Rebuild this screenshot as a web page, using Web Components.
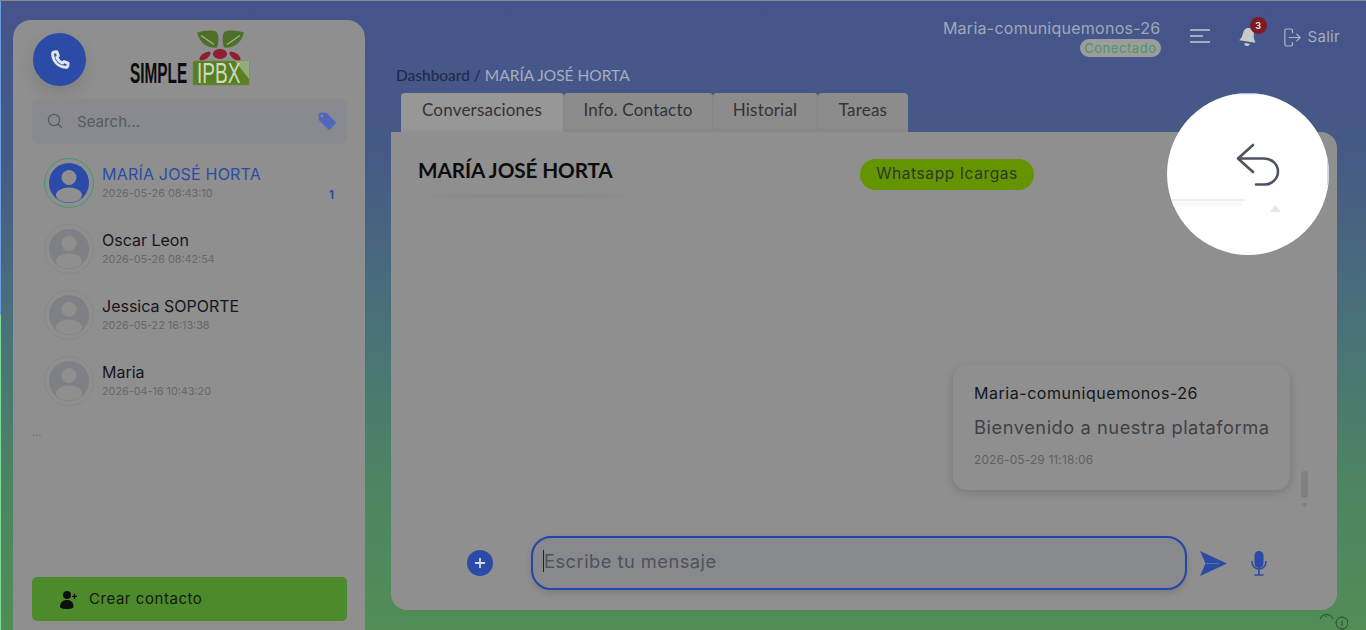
<!DOCTYPE html>
<html lang="es"><head><meta charset="utf-8"><title>Simple IPBX</title>
<style>
html,body{margin:0;height:630px;overflow:hidden}
body{font-family:Inter,"Liberation Sans",sans-serif}
</style></head><body>
<app-shell>
  <side-panel slot="side">
    <contact-row name="MARÍA JOSÉ HORTA" date="2026-05-26 08:43:10" active badge="1"></contact-row>
    <contact-row name="Oscar Leon" date="2026-05-26 08:42:54"></contact-row>
    <contact-row name="Jessica SOPORTE" date="2026-05-22 16:13:38"></contact-row>
    <contact-row name="Maria" date="2026-04-16 10:43:20"></contact-row>
  </side-panel>
  <top-bar slot="top"></top-bar>
  <tab-bar slot="tabs"></tab-bar>
  <chat-panel slot="chat"></chat-panel>
</app-shell>
<tour-spot></tour-spot>
<script>
function def(name, html){
  customElements.define(name, class extends HTMLElement{
    constructor(){super();const r=this.attachShadow({mode:'open'});this._h=html;r.innerHTML=typeof html==='function'?'':html;}
    connectedCallback(){ if(typeof this._h==='function') this.shadowRoot.innerHTML=this._h(this); }
  });
}
const SANS='Inter,"Liberation Sans",sans-serif';
def('app-shell',`<style>
:host{display:grid;grid-template-columns:352px 946px;grid-template-rows:131px 478px 20px;column-gap:26px;width:1366px;height:630px;box-sizing:border-box;padding:0 0 0 13px;overflow:hidden;position:relative;
background:linear-gradient(180deg,#45548c 0%,#465a85 25%,#49707a 50%,#4d8364 75%,#518d55 100%);border-top:1px solid #888}
.side{grid-row:1/4;padding-top:19px;min-height:0}
.right{grid-row:1;display:flex;flex-direction:column;min-width:0}
.chat{grid-row:2}
.strip{position:absolute;left:0;top:0;bottom:0;width:1px;background:linear-gradient(180deg,#6f9ae0 0 50%,#7fdca0 50% 100%)}
.mark{position:absolute;right:18px;bottom:0}
</style><span class="strip"></span>
<div class="side"><slot name="side"></slot></div>
<div class="right"><slot name="top"></slot><slot name="tabs"></slot></div>
<div class="chat"><slot name="chat"></slot></div>
<svg class="mark" width="30" height="20" viewBox="0 0 30 20" fill="none" stroke="#20352a" stroke-width=".8"><path d="M2 9a7 7 0 0 1 13 0"/><path d="M8 6v1"/><circle cx="24" cy="13" r="6"/><path d="M24 11v5"/></svg>`);

def('side-panel',`<style>
:host{display:flex;flex-direction:column;box-sizing:border-box;width:352px;height:640px;background:#8f8f8f;border-radius:18px 18px 0 0;padding:13px 18px 0 19px;font-family:${SANS}}
.head{display:flex;align-items:flex-start;height:66px}
.call{width:53px;height:53px;border-radius:50%;background:#2b4ba6;box-shadow:0 8px 16px rgba(0,0,0,.1);display:flex;align-items:center;justify-content:center;flex:none;margin-left:1px}
.logo{margin:-3px 0 0 42px;display:block;overflow:visible}
.search{display:flex;align-items:center;height:45px;box-sizing:border-box;background:#888a90;border-radius:7px;padding:0 10px 1px 15px;color:#565a60;font-size:15px;letter-spacing:.05px}
.search span{margin-left:14px;flex:1}
.list{display:flex;flex-direction:column;margin-top:6px}
.more{color:#5f7a60;font-size:11px;line-height:12px;margin-top:12px}
.spacer{flex:1}
.btn{display:flex;align-items:center;height:44px;flex:none;background:#4c8a2b;border-radius:5px;margin-bottom:39px;padding-left:28px;color:#141a12;font-size:15px;letter-spacing:.55px}
.btn span{margin:0 0 1px 10px}
</style>
<div class="head">
 <div class="call"><svg width="22" height="22" viewBox="0 0 24 24" fill="none" stroke="#dfe4ee" stroke-width="3.2" stroke-linecap="round" stroke-linejoin="round"><path d="M6 3.2 8.6 3l1.6 4.4-1.7 1.7c.9 2.6 3.2 5 6.2 6.3l1.7-1.700 4.400 1.700-.2 2.600c-.2 1.300-1.300 2.100-2.600 2C10 19.300 4.700 13.800 3.900 5.800 3.800 4.500 4.700 3.400 6 3.200Z"/></svg></div>
 <svg class="logo" width="122" height="56" viewBox="0 0 122 56">
  <g transform="translate(0 -1.500)">
  <path d="M69 4c6-2 14-3 19-1 3 3 3 10 1 16-8 1-17-3-20-15Z" fill="#4f7028"/>
  <path d="M116 4c-6-2-14-3-19-1-3 3-3 10-1 16 8 1 17-3 20-15Z" fill="#4f7028"/>
  <path d="M73 7l13 9M112 7 99 16" stroke="#a6b38f" stroke-width="1.200"/>
  </g>
  <ellipse cx="92" cy="24" rx="7" ry="5" fill="#8e1f30"/>
  <ellipse cx="77" cy="26" rx="6.500" ry="3" fill="#8e1f30" transform="rotate(-35 77 26)"/>
  <ellipse cx="107" cy="26" rx="6.500" ry="3" fill="#8e1f30" transform="rotate(35 107 26)"/>
  <rect x="65" y="31" width="56" height="24" rx="1" fill="#587f22" stroke="#6d8a3a" stroke-width=".6"/>
  <path d="M121 31v18L107 31Z" fill="#a8b89a" opacity=".75"/>
  <text transform="translate(2 53) scale(.53 1)" font-family="'Liberation Sans',sans-serif" font-weight="700" font-size="29" fill="#0d0d0d">SIMPLE</text>
  <text transform="translate(69 53) scale(.66 1)" font-family="'Liberation Sans',sans-serif" font-size="29" fill="#cfd8c0">IPBX</text>
 </svg>
</div>
<div class="search"><svg width="16" height="16" viewBox="0 0 16 16" fill="none" stroke="#55585e" stroke-width="1.200"><circle cx="7" cy="7" r="5.600"/><path d="m11 11 3.800 3.800"/></svg><span>Search...</span>
<svg width="20" height="20" viewBox="0 0 20 20"><path d="M1.500 3.500 3 1.500l6.500.3 9 9c.6.600.6 1.500 0 2l-5.500 5.500c-.6.600-1.500.6-2 0l-9-9Z" fill="#5068bb"/><circle cx="5" cy="5" r="1.300" fill="#888a90"/></svg></div>
<div class="list"><slot></slot></div>
<div class="more">...</div>
<div class="spacer"></div>
<div class="btn"><svg width="19" height="19" viewBox="0 0 19 19" fill="#0c0f0a"><circle cx="7" cy="5" r="4"/><path d="M0 17c0-4.500 3-7 7-7s6.500 2.500 6.500 7c0 1-3 2-6.500 2s-7-1-7-2Z"/><path d="M14.500 3.800v5M12 6.300h5" stroke="#0c0f0a" stroke-width="1.300"/></svg><span>Crear contacto</span></div>`);

def('contact-row',el=>{
 const a=el.hasAttribute('active');
 const c=a?'#2a4ca8':'#7f8085';
 return `<style>
:host{display:flex;align-items:center;height:66px;box-sizing:border-box;padding:0 13px 0 12px;font-family:${SANS}}
.ring{width:50px;height:50px;border-radius:50%;box-sizing:border-box;border:1px solid ${a?'#3c9a70':'#888888'};display:flex;align-items:center;justify-content:center;flex:none;margin-right:8px}
.t{flex:1;min-width:0}
.n{font-size:16px;line-height:19px;letter-spacing:${a?'.2px':'0'};color:${a?'#2a4ca8':'#15161a'};white-space:nowrap}
.d{font-size:10.800px;line-height:14px;margin-top:3px;color:#66666c;white-space:nowrap}
.b{font-size:11.500px;font-weight:700;color:#2a4ca8;align-self:flex-end;margin-bottom:14px}
</style><div class="ring"><svg width="40" height="40" viewBox="0 0 40 40"><circle cx="20" cy="20" r="20" fill="${c}"/><circle cx="20" cy="14.500" r="7.500" fill="#8f8f8f"/><ellipse cx="20" cy="32" rx="13" ry="7.500" fill="#8f8f8f"/></svg></div>
<div class="t"><div class="n">${el.getAttribute('name')}</div><div class="d">${el.getAttribute('date')}</div></div>
${el.getAttribute('badge')?`<div class="b">${el.getAttribute('badge')}</div>`:''}`;
});

def('top-bar',`<style>
:host{display:block;height:92px;box-sizing:border-box;color:#a4abbd;font-family:${SANS}}
.r{display:flex;justify-content:flex-end;align-items:center;height:70px;margin-right:-3px}
.u{display:flex;flex-direction:column;align-items:flex-end;margin:3px 29px 0 0}
.u b{font-weight:400;font-size:16px;line-height:19px;letter-spacing:.26px;color:#a0a8b8}
.u i{font-style:normal;font-size:13px;line-height:18px;background:#9c9c9c;border-radius:9px;padding:0 4px;color:#4a9668;letter-spacing:.55px;margin-top:1px}
.bell{position:relative;margin:3px 26px 0 28px;width:20px;height:22px}
.bell svg{transform:rotate(8deg)}
.bell em{position:absolute;left:12px;top:-10px;width:17px;height:17px;border-radius:50%;background:#7e1a22;color:#dfdfdf;font-style:normal;font-weight:700;font-size:9px;line-height:17px;text-align:center}
.s{font-size:15px;letter-spacing:.3px;margin-left:7px;margin-top:1px}
.out{margin-top:2px}
.c{font-size:15.500px;font-family:Lato,sans-serif;color:#a5adbd;line-height:18px;padding-left:5px;margin-top:-5px}
.c span{color:#1e2840}
</style>
<div class="r"><div class="u"><b>Maria-comuniquemonos-26</b><i>Conectado</i></div>
<svg width="20" height="14" viewBox="0 0 20 14" stroke="#c5c9d2" stroke-width="1.300"><path d="M0 1h20M0 7h13M0 13h20"/></svg>
<div class="bell"><svg width="20" height="20" viewBox="0 0 20 22" fill="#c9c9c9"><path d="M10 1c4 0 6 3 6 7 0 4 2 6 3 8H1c1-2 3-4 3-8 0-4 2-7 6-7Z"/><path d="M7 18h6a3 3 0 0 1-6 0Z"/></svg><em>3</em></div>
<svg class="out" width="17" height="21" viewBox="0 0 20 22" fill="none" stroke="#b1b6c3" stroke-width="1.400" stroke-linecap="round" stroke-linejoin="round"><path d="M10 5V3a2 2 0 0 0-2-2H3a2 2 0 0 0-2 2v16a2 2 0 0 0 2 2h5a2 2 0 0 0 2-2v-2"/><path d="M6 11h13M15 7l4 4-4 4"/></svg>
<span class="s">Salir</span></div>
<div class="c"><span>Dashboard / </span>MARÍA JOSÉ HORTA</div>`);

def('tab-bar',`<style>
:host{display:flex;height:39px;padding-left:10px;font-family:Lato,"Liberation Sans",sans-serif}
a{display:flex;align-items:center;justify-content:center;box-sizing:border-box;padding-bottom:6px;border-radius:4px 4px 0 0;background:#8c8c8c;color:#333;font-size:17px;letter-spacing:.2px;border-right:1px solid #858585;box-shadow:inset 0 -6px 6px -6px rgba(0,0,0,.08)}
a.on{background:#979797}
</style><a class="on" style="width:163px">Conversaciones</a><a style="width:149px">Info. Contacto</a><a style="width:105px">Historial</a><a style="width:90px;border-right:0">Tareas</a>`);

def('chat-panel',`<style>
:host{display:flex;flex-direction:column;box-sizing:border-box;height:478px;width:946px;background:#8f8f8f;border-radius:0 16px 16px 16px;font-family:${SANS};position:relative}
.h{display:flex;align-items:flex-start;height:64px;flex:none}
h1{margin:25px 0 0 27px;font:700 20.700px/26px Lato,sans-serif;color:#0d0d0d;width:442px;letter-spacing:-.1px;position:relative}
h1::after{content:"";position:absolute;left:12px;top:37px;width:195px;height:2px;background:#8b8b8b;box-shadow:0 1px 3px rgba(0,0,0,.08);border-radius:50%}
.pill{margin-top:27px;height:31px;width:174px;background:#649400;border-radius:16px;display:flex;align-items:center;justify-content:center;font-size:15.500px;letter-spacing:.6px;color:#2d3a2b;padding-bottom:3px;box-sizing:border-box}
.body{flex:1;display:flex;justify-content:flex-end;align-items:flex-end;padding:0 47px 0 0;min-height:0}
.foot{display:flex;align-items:center;height:54px;flex:none;margin:46px 0 20px 0;padding-left:76px}
.plus{width:26px;height:26px;border-radius:50%;background:#2b4ba6;display:flex;align-items:center;justify-content:center;flex:none;margin-right:38px}
.in{width:656px;height:54px;box-sizing:border-box;border:2px solid #2346a8;border-radius:20px;background:#87898d;box-shadow:0 3px 6px rgba(0,0,0,.12);display:flex;align-items:center;padding:0 0 4px 10px;font-size:18.300px;color:#505258;letter-spacing:.47px;flex:none}
.in u{display:block;width:1px;height:22px;background:#222}
.send{margin-left:13px}
.mic{margin-left:24px}
.bar{position:absolute;right:29px;top:339px;width:7px;height:38px}
</style>
<div class="h"><h1>MARÍA JOSÉ HORTA</h1><div class="pill">Whatsapp Icargas</div></div>
<div class="body"><chat-bubble who="Maria-comuniquemonos-26" text="Bienvenido a nuestra plataforma" date="2026-05-29 11:18:06"></chat-bubble></div>
<div class="foot"><div class="plus"><svg width="10" height="10" viewBox="0 0 10 10" stroke="#d6dbe8" stroke-width="1.800"><path d="M5 0v10M0 5h10"/></svg></div>
<div class="in"><u></u>Escribe tu mensaje</div>
<svg class="send" width="27" height="25" viewBox="0 0 27 25"><path d="M0 0 27 12.500 0 25 5.500 12.500Z" fill="#2b4ba6"/><path d="M6 12.500h13" stroke="#6f80b0" stroke-width=".7"/></svg>
<svg class="mic" width="16" height="25" viewBox="0 0 16 25" fill="none" stroke="#2b4ba6" stroke-width="1.600"><rect x="3.500" y="0" width="9" height="17" rx="4.500" fill="#2b4ba6" stroke="none"/><path d="M1 10c0 5 3 8 7 8s7-3 7-8M8 18v6M3.500 24h9"/></svg></div>
<svg class="bar" viewBox="0 0 7 38"><rect width="7" height="27" rx="3.500" fill="#808082"/><path d="M.5 32h6l-3 5Z" fill="#808082"/></svg>`);

def('chat-bubble',el=>`<style>
:host{display:block;box-sizing:border-box;width:337px;height:125px;background:#8f8f8f;border-radius:14px;box-shadow:0 3px 8px rgba(0,0,0,.16);padding:18px 20px 0 21px;font-family:${SANS}}
.w{font-size:16px;line-height:20px;color:#15161a;letter-spacing:.54px;white-space:nowrap}
.t{font-size:18.300px;line-height:24px;color:#3f4147;margin-top:12px;letter-spacing:.53px;white-space:nowrap}
.d{font-size:12px;line-height:16px;color:#5f6065;margin-top:13px;letter-spacing:.1px}
</style><div class="w">${el.getAttribute('who')}</div><div class="t">${el.getAttribute('text')}</div><div class="d">${el.getAttribute('date')}</div>`);

def('tour-spot',`<style>
:host{position:absolute;left:1167px;top:93px;width:162px;height:162px;border-radius:50%;background:#fff;overflow:hidden;display:block}
svg{display:block}
</style><svg width="162" height="162" viewBox="1167 93 162 162">
<path d="M1230 93.500h36" stroke="#9dbcf2" stroke-width="1.500"/>
<path d="M1328 135v50" stroke="#b5ccf5" stroke-width="1.500"/>
<path d="M1170 200h75" stroke="#eeeff1" stroke-width="2"/><path d="M1172 204h70" stroke="#f7f8f9" stroke-width="5"/>
<path d="M1270 212h11l-5.500-7Z" fill="#e3e6ea"/>
<path d="M1253 145 1238 158.500 1253 172M1238 158.500h26c8 0 14 6 14 13s-6 13-13 13h-9" fill="none" stroke="#4d5361" stroke-width="2.600" stroke-linecap="round" stroke-linejoin="round"/>
</svg>`);
</script></body></html>
